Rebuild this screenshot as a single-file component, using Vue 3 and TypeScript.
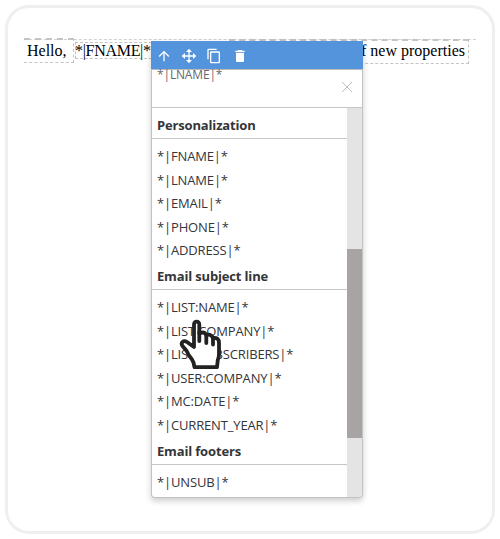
<script setup lang="ts">
interface TagGroup {
  title: string
  tags: string[]
}

const groups: TagGroup[] = [
  { title: 'Personalization', tags: ['FNAME', 'LNAME', 'EMAIL', 'PHONE', 'ADDRESS'] },
  {
    title: 'Email subject line',
    tags: ['LIST:NAME', 'LIST:COMPANY', 'LIST:SUBSCRIBERS', 'USER:COMPANY', 'MC:DATE', 'CURRENT_YEAR'],
  },
  { title: 'Email footers', tags: ['UNSUB'] },
]

const asTag = (name: string): string => `*|${name}|*`
</script>

<template>
  <main class="card">
    <div class="line">
      <span class="chunk hello">Hello,</span>
      <span class="chunk merge">{{ asTag('FNAME') }}</span>
      <span class="chunk rest">f new properties</span>
    </div>

    <section class="popup">
      <div class="toolbar">
        <svg viewBox="0 0 24 24" class="icon"><path d="M4 12l1.41 1.41L11 7.83V20h2V7.83l5.58 5.59L20 12l-8-8-8 8z" /></svg>
        <svg viewBox="0 0 24 24" class="icon"><path d="M12 1l4.500 5H13v5h5V7.500l5 4.500-5 4.500V13h-5v5h3.500L12 23l-4.500-5H11v-5H6v3.500L1 12l5-4.500V11h5V6H7.500z" /></svg>
        <svg viewBox="0 0 24 24" class="icon"><path d="M16 1H4c-1.100 0-2 .9-2 2v14h2V3h12V1zm3 4H8c-1.100 0-2 .9-2 2v14c0 1.100.9 2 2 2h11c1.100 0 2-.9 2-2V7c0-1.100-.9-2-2-2zm0 16H8V7h11v14z" /></svg>
        <svg viewBox="0 0 24 24" class="icon"><path d="M6 19c0 1.100.9 2 2 2h8c1.100 0 2-.9 2-2V7H6v12zM19 4h-3.500l-1-1h-5l-1 1H5v2h14V4z" /></svg>
      </div>
      <div class="field">
        <span class="value">{{ asTag('LNAME') }}</span>
        <svg viewBox="0 0 12 12" class="clear"><path d="M1 1l10 10M11 1L1 11" /></svg>
      </div>
      <div class="body">
        <div class="list">
          <template v-for="group in groups" :key="group.title">
            <h2>{{ group.title }}</h2>
            <ul>
              <li v-for="tag in group.tags" :key="tag">{{ asTag(tag) }}</li>
            </ul>
          </template>
        </div>
        <div class="track"><div class="thumb"></div></div>
      </div>
      <svg viewBox="0 0 44 52" class="hand">
        <path d="M16 29V6.200a2.600 2.600 0 0 1 5.300 0V15.500q4.700-2.500 7 1.500q4.700-1.500 6.700 3q6-1 6 5v11q0 3-1.200 6L39 49.200H16.500q-.5-5-3-8.500q-3.500-4-5-8L4.500 28c-2.300-3.500 1-6.300 4.500-4z" />
        <path d="M21.300 14.500V23M28.300 17V25M35 20V26.500" />
      </svg>
    </section>
  </main>
</template>

<style>
body {
  background: #fff;
}
</style>

<style scoped>
.card {
  position: relative;
  box-sizing: border-box;
  width: 490px;
  height: 529px;
  margin: 5px;
  border: 3px solid #efefef;
  border-radius: 24px;
  padding: 31px 16px 0;
}
.line {
  display: flex;
  align-items: flex-start;
  width: 452px;
  height: 24px;
  border-top: 1px dashed #d2d2d2;
  font: 16px/18px "Liberation Serif", serif;
  color: #000;
  white-space: nowrap;
}
.chunk {
  box-sizing: border-box;
  border: 1px dashed #c4c4c4;
}
.hello {
  width: 50px;
  height: 25px;
  margin-top: -2px;
  padding: 2px 0 0 3px;
  border-left: 0;
  border-top-width: 2px;
}
.merge {
  width: 77px;
  height: 17px;
  margin: 2px 0 0 1px;
  line-height: 16px;
  letter-spacing: -0.3px;
  text-indent: -1px;
}
.rest {
  width: 240px;
  height: 25px;
  margin: -1px 0 0 77px;
  padding: 1px 3px 0 0;
  border-top-width: 2px;
  text-align: right;
}
.popup {
  position: absolute;
  left: 143px;
  top: 33px;
  box-sizing: border-box;
  width: 212px;
  height: 457px;
  display: flex;
  flex-direction: column;
  border: 1px solid #c2c2c2;
  border-top: 0;
  border-radius: 0 0 4px 4px;
  background: #fff;
  box-shadow: 0 3px 6px rgba(0, 0, 0, 0.2);
  font-family: "Open Sans", sans-serif;
  font-size: 13px;
  letter-spacing: -0.16px;
  color: #343539;
}
.toolbar {
  display: flex;
  align-items: center;
  gap: 9.400px;
  height: 28px;
  margin: 0 -1px;
  padding: 1px 0 0 4.600px;
  box-sizing: border-box;
  background: #5394dd;
}
.icon {
  width: 16px;
  height: 16px;
  fill: #fff;
}
.field {
  box-sizing: border-box;
  display: flex;
  justify-content: space-between;
  height: 39px;
  padding: 0 9px 0 5px;
  border-top: 1px solid #bbb;
  border-bottom: 1px solid #c6c6c6;
}
.value {
  height: 18px;
  margin-top: -4px;
  font-size: 12px;
  line-height: 18px;
  color: #66676c;
}
.clear {
  width: 12px;
  height: 12px;
  margin-top: 11px;
  fill: none;
  stroke: #bcbcbc;
  stroke-width: 1;
}
.body {
  flex: 1;
  display: flex;
  overflow: hidden;
  border-radius: 0 0 3px 3px;
}
.list {
  flex: 1;
  padding-top: 3px;
}
h2 {
  box-sizing: border-box;
  height: 28px;
  margin: 0;
  padding-left: 5px;
  border-bottom: 1px solid #c6c6c6;
  font-size: 13px;
  font-weight: 700;
  line-height: 28px;
}
ul {
  margin: 0 0 -0.500px;
  padding: 6px 0 0 5px;
  list-style: none;
}
li {
  height: 23.500px;
  line-height: 23.500px;
  white-space: nowrap;
}
.track {
  width: 15px;
  padding-top: 141px;
  box-sizing: border-box;
  background: #e4e4e4;
}
.thumb {
  height: 189px;
  background: #a8a4a4;
}
.hand {
  position: absolute;
  left: 26px;
  top: 277px;
  width: 44px;
  height: 52px;
  fill: #fff;
  stroke: #222;
  stroke-width: 3.800;
  stroke-linejoin: round;
  stroke-linecap: round;
}
</style>
